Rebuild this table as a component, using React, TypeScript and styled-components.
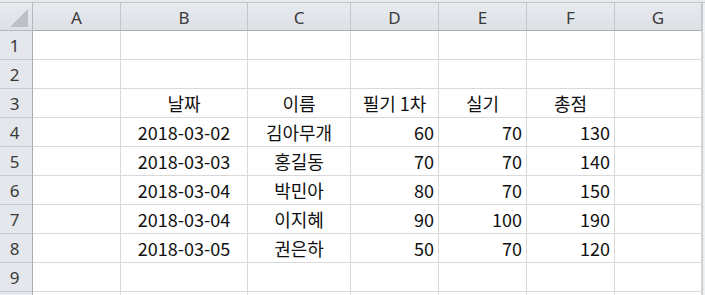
import React from 'react';
import styled, { createGlobalStyle } from 'styled-components';

const GlobalStyle = createGlobalStyle`
  html, body {
    margin: 0;
    padding: 0;
    background: #ffffff;
  }
  body {
    font-family: 'Noto Sans CJK KR', 'Noto Sans', sans-serif;
    overflow: hidden;
  }
`

const COLUMNS = ['A', 'B', 'C', 'D', 'E', 'F', 'G'];

type Align = 'left' | 'center' | 'right';

type Row = {
  label: string,
  cells: { [col: string]: { text: string, align: Align } }
}

const dataRows: Row[] = [
  ['2018-03-02', '김아무개', '60', '70', '130'],
  ['2018-03-03', '홍길동', '70', '70', '140'],
  ['2018-03-04', '박민아', '80', '70', '150'],
  ['2018-03-04', '이지혜', '90', '100', '190'],
  ['2018-03-05', '권은하', '50', '70', '120'],
].map(([date, name, written, practical, total], i) => ({
  label: String(i + 4),
  cells: {
    B: { text: date, align: 'center' as Align },
    C: { text: name, align: 'center' as Align },
    D: { text: written, align: 'right' as Align },
    E: { text: practical, align: 'right' as Align },
    F: { text: total, align: 'right' as Align },
  }
}));

const rows: Row[] = [
  { label: '1', cells: {} },
  { label: '2', cells: {} },
  {
    label: '3',
    cells: {
      B: { text: '날짜', align: 'center' },
      C: { text: '이름', align: 'center' },
      D: { text: '필기 1차', align: 'center' },
      E: { text: '실기', align: 'center' },
      F: { text: '총점', align: 'center' },
    }
  },
  ...dataRows,
  { label: '9', cells: {} },
  // row 10 only peeks in at the bottom edge, its number is out of view
  { label: '', cells: {} },
];

const Sheet = styled.div`
  width: 705px;
  height: 295px;
  overflow: hidden;
  background: #eef0f3;
`

const TopStrip = styled.div`
  height: 2px;
  background: #e6e8eb;
  border-bottom: 1px solid #c3c7cd;
`

const Grid = styled.div`
  display: grid;
  grid-template-columns: 33px 88px 127px 103px 88px 88px 88px 87px;
  grid-template-rows: 28px;
  grid-auto-rows: 29px;
  width: 702px;
  background: #ffffff;
  border-right: 1px solid #c9ccd1;
`

const Corner = styled.div`
  position: relative;
  background: linear-gradient(#e7eaee, #dde1e6);
  border-right: 1px solid #b3b8bf;
  border-bottom: 1px solid #b3b8bf;
  box-sizing: border-box;
`

const CornerTriangle = styled.div`
  position: absolute;
  right: 4px;
  bottom: 3px;
  width: 0;
  height: 0;
  border-left: 18px solid transparent;
  border-bottom: 18px solid #bcc1c7;
`

const ColHeader = styled.div`
  display: flex;
  align-items: center;
  justify-content: center;
  background: linear-gradient(#e7eaee, #dde1e6);
  border-right: 1px solid #c2c6cc;
  border-bottom: 1px solid #a9aeb5;
  box-sizing: border-box;
  font-family: 'Noto Sans', 'Noto Sans CJK KR', sans-serif;
  font-size: 17px;
  color: #3a3a3a;
  padding-top: 1px;
`

const RowHeader = styled.div`
  display: flex;
  align-items: center;
  justify-content: center;
  background: #e4e7eb;
  border-right: 1px solid #a9aeb5;
  border-bottom: 1px solid #c8ccd1;
  box-sizing: border-box;
  font-family: 'Noto Sans', 'Noto Sans CJK KR', sans-serif;
  font-size: 17px;
  color: #3a3a3a;
  padding-right: 3px;
`

const Cell = styled.div<{ $align: Align }>`
  display: flex;
  align-items: center;
  justify-content: ${p => p.$align === 'right' ? 'flex-end' : p.$align === 'center' ? 'center' : 'flex-start'};
  padding: 0 4px 1px 4px;
  border-right: 1px solid #d9d9d9;
  border-bottom: 1px solid #d9d9d9;
  box-sizing: border-box;
  font-family: 'Noto Sans CJK KR', 'Noto Sans', sans-serif;
  font-size: 18px;
  color: #111111;
  white-space: nowrap;
  overflow: hidden;
`

function App() {
  return (
    <Sheet>
      <GlobalStyle />
      <TopStrip />
      <Grid>
        <Corner><CornerTriangle /></Corner>
        {COLUMNS.map(c => <ColHeader key={c}>{c}</ColHeader>)}
        {rows.map((row, i) => (
          <React.Fragment key={i}>
            <RowHeader>{row.label}</RowHeader>
            {COLUMNS.map(c => {
              const cell = row.cells[c];
              return (
                <Cell key={c} $align={cell ? cell.align : 'left'}>
                  {cell ? cell.text : ''}
                </Cell>
              );
            })}
          </React.Fragment>
        ))}
      </Grid>
    </Sheet>
  );
}

export default App;
